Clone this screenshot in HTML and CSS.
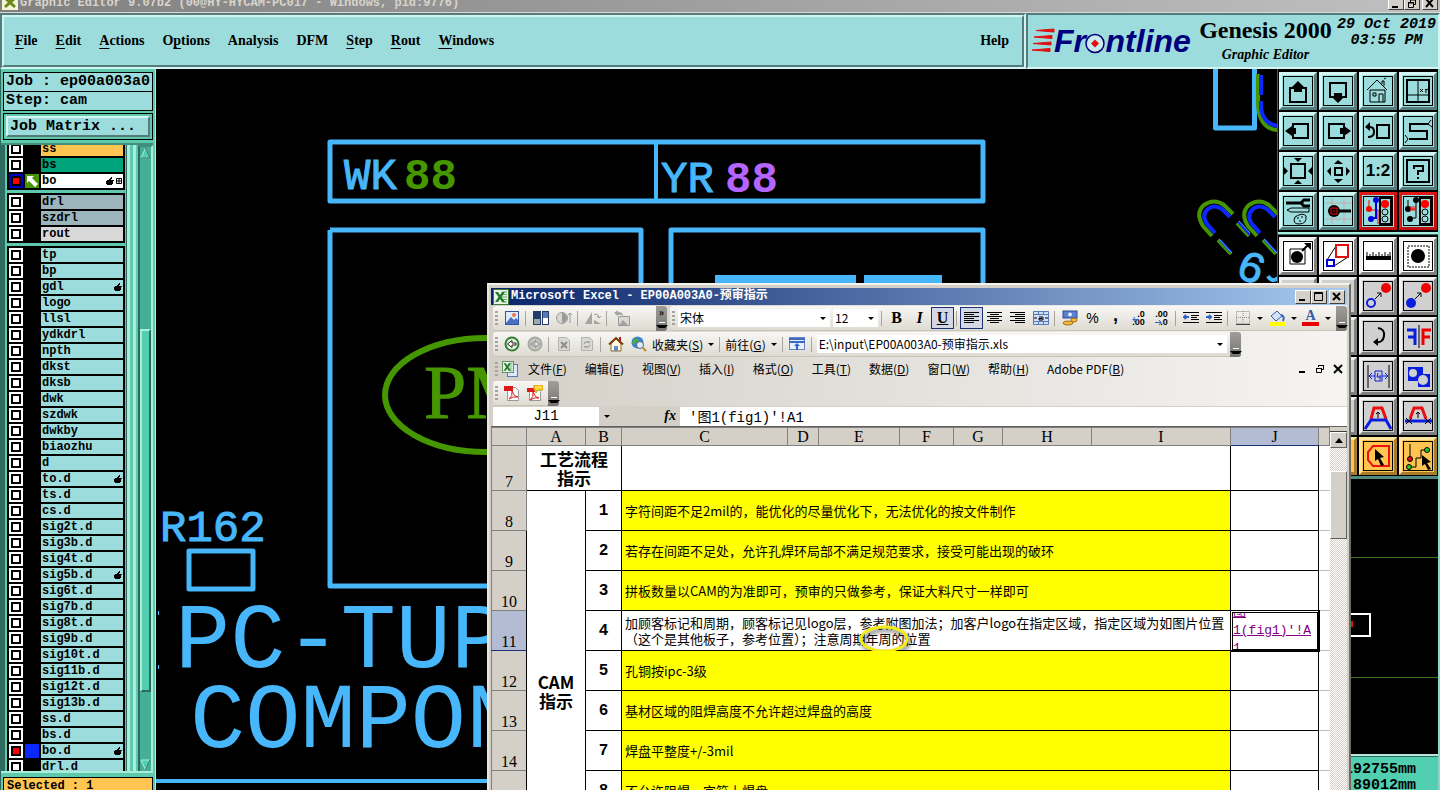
FILE: index.html
```html
<!DOCTYPE html>
<html lang="zh-CN">
<head>
    <meta charset="UTF-8">
    <meta name="viewport" content="width=device-width, initial-scale=1.0">
    <title>Graphic Editor</title>
    <link rel="stylesheet" href="styles.css">
</head>
<body>
    <svg class="sprite">
        <symbol id="hand" viewBox="0 0 8 8"><path d="M0 4h1V3h2V2h1V1h1V0h1v2H5v1h3v1H7v3H6v1H1V7H0z"/></symbol>
        <symbol id="grid" viewBox="0 0 6 6"><path d="M.5.5h5v5h-5zM3 0v6M0 3h6" fill="none" stroke="#000"/></symbol>
        <symbol id="excel" viewBox="0 0 16 16">
            <rect x=".5" y=".5" width="15" height="15" fill="#e8f4e4" stroke="#3c7a3c"/>
            <path d="M9 3h5M9 5.5h5M9 8h5M9 10.500h5M9 13h5" stroke="#6aa56a"/>
            <path d="M2 3h3l2 3 2-3h3L8.500 8l3.500 5H9L7 10l-2 3H2l3.500-5z" fill="#1f7a2e"/>
        </symbol>
    </svg>

    <header class="titlebar">
        <svg class="app-icon" width="16" height="16"><rect width="16" height="16" fill="#f4f4d8"/><path d="M3 4l10 9M13 4L3 13" stroke="#6b8a1c" stroke-width="3"/></svg>
        <span class="title-text">Graphic Editor 9.07b2 (00@HY-HYCAM-PC017 - Windows, pid:9776)</span>
        <div class="win-buttons">
            <button class="win-btn" aria-label="Minimize"><svg width="12" height="11"><path d="M2 9h6" stroke="#000" stroke-width="2"/></svg></button>
            <button class="win-btn" aria-label="Restore"><svg width="12" height="11"><path d="M4.500 4V1.500h5v5H8M2.500 4.500h5v5h-5zM4 2h6M2 5h6" fill="none" stroke="#000"/></svg></button>
            <button class="win-btn close" aria-label="Close"><svg width="12" height="11"><path d="M2 1l7 8M9 1L2 9" stroke="#000" stroke-width="2"/></svg></button>
        </div>
    </header>

    <div class="top">
        <nav class="menu-panel">
            <div class="menu">
                <button><u>F</u>ile</button>
                <button><u>E</u>dit</button>
                <button><u>A</u>ctions</button>
                <button>O<u>p</u>tions</button>
                <button>Analysis</button>
                <button>DFM</button>
                <button><u>S</u>tep</button>
                <button><u>R</u>out</button>
                <button><u>W</u>indows</button>
                <button class="help">Help</button>
            </div>
        </nav>
        <div class="brand">
            <svg class="logo" width="164" height="40" viewBox="1030 22 164 40">
                <path d="M1036 30.500l18-1.500v3zM1034 37l18-1.500v3zM1033 43.500l18-1.500v3zM1032 50l18-1.500v3z" fill="#e01010" stroke="#e01010"/>
                <text x="1054" y="52" class="logo-text">Fr<tspan fill="none">o</tspan>ntline</text>
                <circle cx="1095" cy="43.500" r="9" fill="#c8ecec" stroke="#00007c" stroke-width="1.500"/>
                <path d="M1095 39.500l4 4-4 4-4-4z" fill="#e01010"/>
            </svg>
            <div class="product">
                <div class="product-name">Genesis 2000</div>
                <div class="product-sub">Graphic Editor</div>
            </div>
            <div class="clock">29 Oct 2019<br>03:55 PM</div>
        </div>
    </div>

    <main class="work">
        <aside class="side">
            <div class="job-info">
                <div>Job : ep00a003a0</div>
                <div>Step: cam</div>
            </div>
            <div class="matrix"><button>Job Matrix ...</button></div>
            <div class="layers">
                <div class="layer-list">
                    <div class="group first">
                        <label class="layer"><input type="checkbox"><i></i><span class="orange">ss</span></label>
                        <label class="layer"><input type="checkbox"><i></i><span class="green">bs</span></label>
                        <label class="layer"><input type="checkbox" class="blue" checked><i class="work-layer"><svg width="14" height="14"><path d="M2 2h7L7 4l6 6-3 3-6-6-2 2z" fill="#fff"/></svg></i><span class="white">bo<svg class="mark" width="8" height="8"><use href="#hand"/></svg><svg width="6" height="6"><use href="#grid"/></svg></span></label>
                    </div>
                    <div class="group">
                        <label class="layer"><input type="checkbox"><i></i><span class="steel">drl</span></label>
                        <label class="layer"><input type="checkbox"><i></i><span class="steel">szdrl</span></label>
                        <label class="layer"><input type="checkbox"><i></i><span class="gray">rout</span></label>
                    </div>
                    <div class="group">
                        <label class="layer"><input type="checkbox"><i></i><span>tp</span></label>
                        <label class="layer"><input type="checkbox"><i></i><span>bp</span></label>
                        <label class="layer"><input type="checkbox"><i></i><span>gdl<svg class="mark" width="8" height="8"><use href="#hand"/></svg></span></label>
                        <label class="layer"><input type="checkbox"><i></i><span>logo</span></label>
                        <label class="layer"><input type="checkbox"><i></i><span>llsl</span></label>
                        <label class="layer"><input type="checkbox"><i></i><span>ydkdrl</span></label>
                        <label class="layer"><input type="checkbox"><i></i><span>npth</span></label>
                        <label class="layer"><input type="checkbox"><i></i><span>dkst</span></label>
                        <label class="layer"><input type="checkbox"><i></i><span>dksb</span></label>
                        <label class="layer"><input type="checkbox"><i></i><span>dwk</span></label>
                        <label class="layer"><input type="checkbox"><i></i><span>szdwk</span></label>
                        <label class="layer"><input type="checkbox"><i></i><span>dwkby</span></label>
                        <label class="layer"><input type="checkbox"><i></i><span>biaozhu</span></label>
                        <label class="layer"><input type="checkbox"><i></i><span>d</span></label>
                        <label class="layer"><input type="checkbox"><i></i><span>to.d<svg class="mark" width="8" height="8"><use href="#hand"/></svg></span></label>
                        <label class="layer"><input type="checkbox"><i></i><span>ts.d</span></label>
                        <label class="layer"><input type="checkbox"><i></i><span>cs.d</span></label>
                        <label class="layer"><input type="checkbox"><i></i><span>sig2t.d</span></label>
                        <label class="layer"><input type="checkbox"><i></i><span>sig3b.d</span></label>
                        <label class="layer"><input type="checkbox"><i></i><span>sig4t.d</span></label>
                        <label class="layer"><input type="checkbox"><i></i><span>sig5b.d<svg class="mark" width="8" height="8"><use href="#hand"/></svg></span></label>
                        <label class="layer"><input type="checkbox"><i></i><span>sig6t.d</span></label>
                        <label class="layer"><input type="checkbox"><i></i><span>sig7b.d</span></label>
                        <label class="layer"><input type="checkbox"><i></i><span>sig8t.d</span></label>
                        <label class="layer"><input type="checkbox"><i></i><span>sig9b.d</span></label>
                        <label class="layer"><input type="checkbox"><i></i><span>sig10t.d</span></label>
                        <label class="layer"><input type="checkbox"><i></i><span>sig11b.d</span></label>
                        <label class="layer"><input type="checkbox"><i></i><span>sig12t.d</span></label>
                        <label class="layer"><input type="checkbox"><i></i><span>sig13b.d</span></label>
                        <label class="layer"><input type="checkbox"><i></i><span>ss.d</span></label>
                        <label class="layer"><input type="checkbox"><i></i><span>bs.d</span></label>
                        <label class="layer"><input type="checkbox" checked><i class="shown"></i><span>bo.d<svg class="mark" width="8" height="8"><use href="#hand"/></svg></span></label>
                        <label class="layer"><input type="checkbox"><i></i><span>drl.d</span></label>
                    </div>
                </div>
                <div class="list-edge"></div>
                <div class="scroll">
                    <svg width="11" height="12"><path d="M5.500 1L10 11H1z" fill="#52cfb0" stroke="#a8eedc"/><path d="M5.500 1L10 11H1" fill="none" stroke="#2f6a60"/></svg>
                    <div class="scroll-space"></div>
                    <div class="scroll-thumb"></div>
                    <svg width="11" height="12"><path d="M5.500 11L10 1H1z" fill="#52cfb0" stroke="#a8eedc"/><path d="M5.500 11L10 1" stroke="#2f6a60"/></svg>
                </div>
            </div>
            <div class="selected">Selected : 1</div>
        </aside>

        <section class="canvas">
            <svg width="1122" height="721" viewBox="155 69 1122 721">
                <g fill="none" stroke="#48b6fa" stroke-width="4" stroke-linejoin="round">
                    <rect x="329" y="142" width="653" height="59" stroke-width="5"/>
                    <path d="M655 142v59"/>
                    <path d="M329 230v356h315M329 230h311v200M670 300v-70h312v70" stroke-width="5"/>
                    <rect x="188" y="551" width="64" height="38" stroke-width="5"/>
                    <path d="M155 781h400" />
                    <path d="M1214.500 60v68h39V60" stroke-width="5"/>
                </g>
                <path d="M714 275h141v12H714zM863 275h78v12h-78zM157 611h1v4h-1zM157 665h1v4h-1z" fill="#48b6fa"/>
                <ellipse cx="485" cy="395" rx="101" ry="57" fill="none" stroke="#469600" stroke-width="6"/>
                <text x="423" y="418" class="cad-serif">PM</text>
                <text x="343" y="189" class="cad-small">WK</text>
                <text x="403" y="189" class="cad-digits green-ink">88</text>
                <text x="660" y="192" class="cad-small">YR</text>
                <text x="724" y="192" class="cad-digits violet-ink">88</text>
                <text x="159" y="541" class="cad-small">R162</text>
                <text x="174" y="667" class="cad-large">PC-TUP</text>
                <text x="189" y="747" class="cad-large">COMPON</text>
                <g fill="none" stroke-width="4">
                    <g stroke="#469600">
                        <path d="M1257 74v30q1 25 20 26"/>
                        <path d="M1211 236l-9-10q-8-13 1-21 10-7 20 0l9 9"/>
                        <path d="M1256 236l-9-10q-8-13 1-21 10-7 20 0l9 9"/>
                        <path d="M1217 240l13 14M1262 240l13 14M1236 223l12 13"/>
                    </g>
                    <g stroke="#0a28ff">
                        <path d="M1260 75v20M1260 101v7q2 16 17 18"/>
                        <path d="M1214 233l-8-9q-6-9 1-15 6-5 14 0l8 8"/>
                        <path d="M1259 233l-8-9q-6-9 1-15 6-5 14 0l8 8"/>
                        <path d="M1219 240l11 12M1264 240l11 12M1237 222l12 13" stroke-width="2"/>
                    </g>
                    <path d="M1218 239l13 14M1263 239l13 14M1238 221l11 12" stroke="#48b6fa" stroke-width="1"/>
                    <path d="M1267 276q4 7 10 2" stroke="#48b6fa"/>
                </g>
                <text x="1236" y="281" class="cad-small" transform="rotate(22 1248 270)">6</text>
            </svg>
        </section>

        <aside class="right">
            <div class="tools cyan">
                <button aria-label="Pan up"><svg viewBox="0 0 32 32"><path d="M8 13h16v14H8z" class="b2"/><path d="M16 6l6 6h-2v5h-8v-5h-2z"/></svg></button>
                <button aria-label="Pan down"><svg viewBox="0 0 32 32"><path d="M8 8h16v14H8z" class="b2"/><path d="M16 28l-5-5h1v-5h8v5h1z"/></svg></button>
                <button aria-label="Home"><svg viewBox="0 0 32 32"><path d="M5 15L15 5l10 10M8 15h15v12H8zM17 27v-8h4v8M11 18h3v3h-3zM20 9V6h2v5M22 4l2-1" class="b1"/></svg></button>
                <button aria-label="Area"><svg viewBox="0 0 32 32"><path d="M5 5h22v22H5z" class="b2"/><path d="M16 5v22M5 20h22M18 14l3 3M21 14l-3 3M23 14l1 1 2-1M24 15v3" class="b1"/></svg></button>
                <button aria-label="Pan left"><svg viewBox="0 0 32 32"><path d="M11 9h15v14H11z" class="b2"/><path d="M3 16l7-5v2h4v6h-4v2z"/></svg></button>
                <button aria-label="Pan right"><svg viewBox="0 0 32 32"><path d="M7 9h15v14H7z" class="b2"/><path d="M29 16l-7-5v2h-4v6h4v2z"/></svg></button>
                <button aria-label="Previous view"><svg viewBox="0 0 32 32"><path d="M15 10h12v13H15zM6 12h2q4 0 4 5t-6 5" class="b2"/><path d="M3 12l5-5v9z"/></svg></button>
                <button aria-label="Snake"><svg viewBox="0 0 32 32"><path d="M27 9H8v7h17v8H7" class="b2"/><path d="M26 9l3-4M26 9l4 3M6 24l-3-4M6 24l-3 4" class="b1"/></svg></button>
                <button aria-label="Zoom in"><svg viewBox="0 0 32 32"><path d="M9 9h14v14H9z" class="b2"/><path d="M16 7l-4-4h8zM16 25l-4 4h8zM6 16l-4-4v8zM26 16l4-4v8z"/></svg></button>
                <button aria-label="Zoom out"><svg viewBox="0 0 32 32"><path d="M13 13h7v7h-7z" class="b2"/><path d="M16 5l-4 4h9zM16 28l-4-4h9zM5 16l4-4v9zM28 16l-4-4v9z"/></svg></button>
                <button aria-label="Scale" class="ratio"><span>1:2</span></button>
                <button aria-label="Query"><svg viewBox="0 0 32 32"><path d="M5 5h22v22H5zM12 14v-3h9v5h-5v4M16 22v2" class="b2"/></svg></button>
                <button aria-label="Setup"><svg viewBox="0 0 32 32"><path d="M4 8h15M28 5h-6l-3 3 3 3h6" class="b3"/><path d="M5 15l4-2h18v4H9zM13 22q8-5 11-1 1 8-7 8-7 0-4-7zM15 23h2M19 22h2M17 26h2" class="b1"/></svg></button>
                <button aria-label="Snap"><svg viewBox="0 0 32 32"><path d="M4 8h25M4 24h25M10 3v26M22 3v26" stroke="#c8a8a8"/><circle cx="12" cy="16" r="6"/><path d="M17 16h12" class="b3"/><path d="M9 13h6v6H9zM12 15v2" fill="none" stroke="#f00"/></svg></button>
                <button aria-label="Net on" class="alert"><svg viewBox="0 0 32 32"><path d="M7 5v10M7 15h9v14" fill="none" stroke="#f00"/><path d="M14 6v17H9" fill="none" stroke="#0000e0" stroke-width="2"/><circle cx="7" cy="14" r="3" fill="#f00"/><circle cx="14" cy="5" r="3" fill="#0000e0"/><circle cx="9" cy="24" r="3" fill="#0000e0"/><path d="M18 3h11v26H18z" class="b2"/><circle cx="23" cy="9" r="4" fill="#f00"/><circle cx="23" cy="17" r="3" class="b1"/><circle cx="23" cy="24" r="3" class="b1"/></svg></button>
                <button aria-label="Net off" class="alert"><svg viewBox="0 0 32 32"><path d="M14 6v17H9M6 5v10" class="b1"/><circle cx="6" cy="14" r="3"/><circle cx="14" cy="5" r="3"/><circle cx="8" cy="24" r="3"/><path d="M8 14h6M9 11v5M11 11v5M13 11v5" stroke="#f00"/><path d="M18 3h11v26H18z" class="b2"/><circle cx="23" cy="9" r="4" fill="#f00"/><circle cx="23" cy="17" r="3" class="b1"/><circle cx="23" cy="24" r="3" class="b1"/></svg></button>
            </div>
            <div class="tools edit">
                <button class="lit" aria-label="Resize"><svg viewBox="0 0 32 32"><path d="M8 9h15v15H8z" class="b1"/><circle cx="15" cy="17" r="6"/><path d="M20 11l6-6" class="b2"/><path d="M22 3h7v7z"/></svg></button>
                <button class="lit" aria-label="Stretch"><svg viewBox="0 0 32 32"><path d="M14 6L5 20M26 17L12 26" class="b1"/><path d="M14 5h12v12H14z" fill="none" stroke="#e01010" stroke-width="2"/><path d="M5 20h7v6H5z" fill="none" stroke="#0000d0" stroke-width="2"/></svg></button>
                <button class="lit" aria-label="Measure"><svg viewBox="0 0 32 32"><path d="M4 16h25v4H4z"/><path d="M5 12v4M8 14v2M11 12v4M14 14v2M17 12v4M20 14v2M23 12v4M26 14v2M28 12v4" class="b1"/></svg></button>
                <button class="lit" aria-label="Select area"><svg viewBox="0 0 32 32"><path d="M6 6h21v21H6z" class="b1" stroke-dasharray="2 1"/><circle cx="16" cy="16" r="7"/></svg></button>
                <button></button>
                <button></button>
                <button aria-label="Move"><svg viewBox="0 0 32 32"><circle cx="9" cy="23" r="4" fill="none" stroke="#0a1ee0" stroke-width="2"/><circle cx="24" cy="8" r="5" fill="#f00000"/><path d="M13 19l6-6M15 13h4v4" class="b1"/></svg></button>
                <button aria-label="Copy"><svg viewBox="0 0 32 32"><circle cx="9" cy="23" r="5" fill="#0a1ee0"/><circle cx="24" cy="8" r="5" fill="#f00000"/><path d="M13 19l6-6M15 13h4v4" class="b1"/></svg></button>
                <button></button>
                <button></button>
                <button aria-label="Rotate"><svg viewBox="0 0 32 32"><path d="M16 8q7 1 6 8t-8 6" class="b2"/><path d="M11 22l5-4v8z"/></svg></button>
                <button aria-label="Mirror"><svg viewBox="0 0 32 32"><path d="M5 10h8v15M6 17h7" fill="none" stroke="#0a1ee0" stroke-width="3"/><path d="M29 10h-8v15M28 17h-7" fill="none" stroke="#f00000" stroke-width="3"/><path d="M17 5v23" class="b1"/></svg></button>
                <button></button>
                <button></button>
                <button aria-label="Spacing"><svg viewBox="0 0 32 32"><path d="M6 5v23M27 5v23" class="b1"/><path d="M7 16h6M20 16h6M10 13l-3 3 3 3M23 13l3 3-3 3M13 11h7v10h-7zM16 13l-1 4h4M18 15v5" fill="none" stroke="#0a1ee0"/></svg></button>
                <button aria-label="Merge"><svg viewBox="0 0 32 32"><path d="M6 7h15v7h7v13H16v-6H6z" fill="#0a1ee0"/><circle cx="11" cy="13" r="4" fill="#d0d0d0"/><circle cx="21" cy="20" r="5" fill="#d0d0d0"/></svg></button>
                <button></button>
                <button></button>
                <button aria-label="Slope"><svg viewBox="0 0 32 32"><path d="M9 19l3-11h8l4 11" fill="none" stroke="#e81010" stroke-width="3"/><path d="M3 29l6-9h15l5 9" fill="none" stroke="#0a1ee0" stroke-width="3"/><path d="M16 18v-6M14 14l2-2 2 2" class="b1"/></svg></button>
                <button aria-label="Slope cut"><svg viewBox="0 0 32 32"><path d="M8 19l4-11h8l4 11" fill="none" stroke="#e81010" stroke-width="3"/><path d="M3 21h27" stroke="#0a1ee0" stroke-width="3"/><path d="M16 18v-6M14 14l2-2 2 2M4 18l6 6M10 18l-6 6M23 18l6 6M29 18l-6 6" class="b1"/></svg></button>
                <button class="amber"></button>
                <button class="amber"></button>
                <button class="amber" aria-label="Select shape"><svg viewBox="0 0 32 32"><path d="M11 6h16v20H11l-5-6v-8z" fill="none" stroke="#f01010" stroke-width="2"/><path d="M13 9l9 8-4 1 4 7-3 1-3-7-3 2z"/></svg></button>
                <button class="amber" aria-label="Select net"><svg viewBox="0 0 32 32"><path d="M8 4v14M8 27h6v-9h5v-8h5" class="b1"/><circle cx="8" cy="19" r="2.500" fill="#e01010" stroke="#000"/><circle cx="7" cy="27" r="2.500" fill="#2c2" stroke="#000"/><circle cx="25" cy="10" r="2.500" fill="#2c2" stroke="#000"/><path d="M20 15l9 7-4 1 4 6-3 1-3-6-3 2z"/></svg></button>
            </div>
            <div class="overview">
                <svg width="160" height="275" viewBox="1278 479 160 275">
                    <path d="M1278 557.500h160M1278 677.500h160" stroke="#3c7818"/>
                    <rect x="1320" y="614" width="50" height="22" fill="none" stroke="#fff" stroke-width="2"/>
                    <rect x="1345" y="621" width="8" height="6" fill="#c81818"/>
                </svg>
            </div>
            <div class="coords">192755mm<br>89012mm</div>
        </aside>
    </main>

    <section class="excel">
        <div class="xl-title">
            <svg width="16" height="16"><use href="#excel"/></svg>
            <span>Microsoft Excel - EP00A003A0-预审指示</span>
            <div class="win-buttons">
                <button class="win-btn" aria-label="Minimize"><svg width="12" height="11"><path d="M2 9h6" stroke="#000" stroke-width="2"/></svg></button>
                <button class="win-btn" aria-label="Maximize"><svg width="12" height="11"><path d="M1.500 1.500h8v8h-8zM1 2.500h9" fill="none" stroke="#000"/></svg></button>
                <button class="win-btn close" aria-label="Close"><svg width="12" height="11"><path d="M2 2l7 7M9 2L2 9" stroke="#000" stroke-width="2"/></svg></button>
            </div>
        </div>

        <div class="bars">
            <div class="bar-row">
                <div class="bar picture-bar">
                    <span class="grip"></span>
                    <button aria-label="Insert picture"><svg width="16" height="16"><rect x="1.500" y="1.500" width="13" height="13" fill="#dfeaff" stroke="#35529c"/><path d="M2 13l5-6 3 3 2-2 2 2v4H2z" fill="#4a6fc0"/><circle cx="10" cy="5" r="2" fill="#e87840"/></svg></button>
                    <span class="sep"></span>
                    <button aria-label="Color"><svg width="16" height="16"><rect x="0" y="1" width="8" height="14" fill="#243c6c"/><rect x="9.500" y="1.500" width="6" height="13" fill="#fff" stroke="#243c6c"/><rect x="1" y="9" width="6" height="5" fill="#a0a8b0"/><rect x="10" y="2" width="5" height="6" fill="#5878b8"/></svg></button>
                    <button aria-label="Contrast"><svg width="16" height="16"><circle cx="6" cy="8" r="5.500" fill="#d8d8d4" stroke="#9a9a9a"/><path d="M6 3a5 5 0 010 10z" fill="#9a9a9a"/><path d="M14 13V3M12 5l2-2 2 2" fill="none" stroke="#9a9a9a"/></svg></button>
                    <span class="sep"></span>
                    <button aria-label="Rotate left"><svg width="18" height="16"><path d="M8 2v12H1zM10 10l7 4h-7z" fill="#a4a4a0"/><path d="M10 5q4-3 5 3M13 6l2 2 2-2" fill="none" stroke="#9a9a9a"/></svg></button>
                    <span class="sep"></span>
                    <button aria-label="Reset picture"><svg width="16" height="16"><path d="M4.500 6.500h11v9h-11z" fill="#d8d8d4" stroke="#9a9a9a"/><path d="M0 3l4-3v2q5 0 5 4-2-2-5-1v1zM5 15l4-5 5 5z" fill="#a4a4a0"/></svg></button>
                    <span class="bar-end"><b class="more">»</b></span>
                </div>
                <div class="bar grow">
                    <span class="grip"></span>
                    <label class="combo font-combo"><select aria-label="Font"><option>宋体</option></select></label>
                    <label class="combo size-combo"><select aria-label="Size"><option>12</option></select></label>
                    <span class="sep"></span>
                    <button class="letter" aria-label="Bold"><b>B</b></button>
                    <button class="letter" aria-label="Italic"><em>I</em></button>
                    <button class="letter on" aria-label="Underline"><u>U</u></button>
                    <span class="sep"></span>
                    <button class="on" aria-label="Align left"><svg width="15" height="14"><path d="M0 1.500h15M0 3.500h10M0 5.500h15M0 7.500h10M0 9.500h15M0 11.500h10" stroke="#000"/></svg></button>
                    <button aria-label="Center"><svg width="15" height="14"><path d="M0 1.500h15M3 3.500h9M0 5.500h15M3 7.500h9M0 9.500h15M3 11.500h9" stroke="#000"/></svg></button>
                    <button aria-label="Align right"><svg width="15" height="14"><path d="M0 1.500h15M5 3.500h10M0 5.500h15M5 7.500h10M0 9.500h15M5 11.500h10" stroke="#000"/></svg></button>
                    <button aria-label="Merge cells"><svg width="16" height="16"><path d="M.5 1.500h15v13H.5zM.5 4.500h15M.5 11.500h15M5.500 1v3M10.500 1v3M5.500 12v3M10.500 12v3" fill="#cfe0fa" stroke="#5a78b4"/><path d="M1 8h3M12 8h3M6 7h4v3H6V8.500h3" fill="none" stroke="#000"/></svg></button>
                    <span class="sep"></span>
                    <button aria-label="Currency"><svg width="16" height="16"><rect x="1" y="1" width="14" height="7" fill="#5a80d0" stroke="#2c4c98"/><circle cx="8" cy="4.500" r="2" fill="#dfeaff"/><ellipse cx="6" cy="13" rx="5" ry="2" fill="#f0b840" stroke="#a87010"/><ellipse cx="12" cy="10" rx="3" ry="2" fill="#f0b840" stroke="#a87010"/></svg></button>
                    <button class="sign">%</button>
                    <button class="sign comma" aria-label="Comma style">,</button>
                    <button aria-label="Increase decimal" class="dec"><span>.0<br>.00</span><svg width="7" height="5"><path d="M7 2.500H1M3 0L1 2.500 3 5" fill="none" stroke="#2f62c8"/></svg></button>
                    <button aria-label="Decrease decimal" class="dec less"><span>.00<br>.0</span><svg width="7" height="5"><path d="M0 2.500h6M4 0l2 2.500L4 5" fill="none" stroke="#2f62c8"/></svg></button>
                    <span class="sep"></span>
                    <button aria-label="Decrease indent"><svg width="16" height="14"><path d="M0 1.500h16M8 4.500h8M8 6.500h6M8 8.500h8M0 11.500h16" stroke="#000"/><path d="M6 6H1M3 4L1 6l2 2" fill="none" stroke="#2f62c8" stroke-width="2"/></svg></button>
                    <button aria-label="Increase indent"><svg width="16" height="14"><path d="M0 1.500h16M8 4.500h8M8 6.500h6M8 8.500h8M0 11.500h16" stroke="#000"/><path d="M0 6h5M3 4l2 2-2 2" fill="none" stroke="#2f62c8" stroke-width="2"/></svg></button>
                    <span class="sep"></span>
                    <button aria-label="Borders"><svg width="14" height="14"><path d="M.5 .5h13v12H.5zM7 0v12M0 6.500h14" fill="none" stroke="#888" stroke-dasharray="1 1"/><path d="M0 13.500h14" stroke="#444"/></svg></button>
                    <button class="drop" aria-label="Border styles"></button>
                    <button aria-label="Fill color"><svg width="16" height="16"><path d="M2 6l6-5 5 5-6 5z" fill="#d4e2fa" stroke="#3c5aa0"/><path d="M12 5q4 1 2 6" fill="none" stroke="#2f62c8" stroke-width="2"/><path d="M0 12h16v4H0z" fill="#ff0"/></svg></button>
                    <button class="drop" aria-label="Fill colors"></button>
                    <button class="font-color" aria-label="Font color">A</button>
                    <button class="drop" aria-label="Font colors"></button>
                    <span class="bar-end"></span>
                </div>
            </div>

            <div class="bar-row">
                <div class="bar web-bar">
                    <span class="grip"></span>
                    <button aria-label="Back"><svg width="16" height="16"><circle cx="8" cy="8" r="6.500" fill="#e4f4dc" stroke="#2e7d32" stroke-width="2"/><path d="M3.500 8L8 4.500V7h4v2H8v2.500z" fill="#fff" stroke="#222"/></svg></button>
                    <button aria-label="Forward"><svg width="16" height="16"><circle cx="8" cy="8" r="6.500" fill="#c8c8c4" stroke="#a8a8a4" stroke-width="2"/><path d="M12.500 8L8 4.500V7H4v2h4v2.500z" fill="#ddd" stroke="#888"/></svg></button>
                    <span class="sep"></span>
                    <button aria-label="Stop"><svg width="14" height="16"><path d="M1.500 1.500h8l3 3v10h-11z" fill="#d8d8d4" stroke="#b0b0ac"/><path d="M4 6l6 6M10 6l-6 6" stroke="#8c8c88" stroke-width="2"/></svg></button>
                    <button aria-label="Refresh"><svg width="14" height="16"><path d="M1.500 1.500h8l3 3v10h-11z" fill="#d8d8d4" stroke="#b0b0ac"/><path d="M4 8q1-3 4-2l1 1V5M10 9q-1 3-4 2l-1-1v2" fill="none" stroke="#8c8c88"/></svg></button>
                    <span class="sep"></span>
                    <button aria-label="Start page"><svg width="16" height="16"><path d="M3 8v7h10V8L8 3z" fill="#fff8dc" stroke="#8a6a20"/><path d="M1 8.500L8 2l7 6.500" fill="none" stroke="#7a3c10" stroke-width="2"/><path d="M11 1h2v4h-2z" fill="#b02020"/><path d="M6 10h4v5H6z" fill="#6a88c8"/></svg></button>
                    <button aria-label="Search the Web"><svg width="16" height="16"><circle cx="6.500" cy="6.500" r="6" fill="#3c80d0"/><path d="M2 4q3-3 5-1t-2 4-1 4q-4-3-2-7z" fill="#4ca84c"/><circle cx="9" cy="9" r="3.500" fill="#dcecfc" stroke="#567"/><path d="M12 12l3 3" stroke="#c08820" stroke-width="2"/></svg></button>
                    <button class="text-btn">收藏夹(<u>S</u>)<i class="arrow"></i></button>
                    <span class="sep"></span>
                    <button class="text-btn">前往(<u>G</u>)<i class="arrow"></i></button>
                    <span class="sep"></span>
                    <button aria-label="Show only Web toolbar"><svg width="16" height="16"><rect x=".5" y="1.500" width="15" height="12" fill="#e8f0ff" stroke="#6a88c8"/><path d="M0 3h16M0 6h16" stroke="#3c68c0" stroke-width="2"/><path d="M8 7l3 3H9v4H7v-4H5z" fill="#2f62c8"/></svg></button>
                    <span class="sep"></span>
                    <label class="combo address"><input type="text" aria-label="Address" value="E:\input\EP00A003A0-预审指示.xls"></label>
                    <span class="bar-end"></span>
                </div>
            </div>

            <div class="xl-menu">
                <span class="grip"></span>
                <svg class="doc-icon" width="16" height="16"><rect x="5.500" y="3.500" width="10" height="12" fill="#dce8fc" stroke="#5a78b4"/><use href="#excel" width="12" height="12"/></svg>
                <button>文件(<u>F</u>)</button>
                <button>编辑(<u>E</u>)</button>
                <button>视图(<u>V</u>)</button>
                <button>插入(<u>I</u>)</button>
                <button>格式(<u>O</u>)</button>
                <button>工具(<u>T</u>)</button>
                <button>数据(<u>D</u>)</button>
                <button>窗口(<u>W</u>)</button>
                <button>帮助(<u>H</u>)</button>
                <button>Adobe PDF(<u>B</u>)</button>
                <div class="doc-buttons">
                    <svg width="10" height="10"><path d="M2 8h6" stroke="#000" stroke-width="2"/></svg>
                    <svg width="10" height="10"><path d="M3.500 3V1.500h5v4H7M1.500 4.500h5v4h-5zM3 1.500h6M1 4.500h6" fill="none" stroke="#000"/></svg>
                    <svg width="10" height="10"><path d="M1 1l8 8M9 1L1 9" stroke="#000" stroke-width="2"/></svg>
                </div>
            </div>

            <div class="bar-row">
                <div class="bar pdf-bar">
                    <span class="grip"></span>
                    <button aria-label="Convert to PDF"><svg width="16" height="16"><path d="M3.500 2.500h8l3 3v10h-11z" fill="#fff" stroke="#999"/><path d="M0 1h9v5H0z" fill="#d81c1c"/><path d="M5 14q4-3 3-8 2 6 6 6-5-1-9 2z" fill="none" stroke="#d81c1c"/></svg></button>
                    <button aria-label="Convert and send for review"><svg width="16" height="16"><path d="M2.500 3.500h8l3 3v9h-11z" fill="#fff" stroke="#999"/><path d="M0 3h8v4H0z" fill="#d81c1c"/><path d="M3 15q4-3 3-8 2 6 6 6-5-1-9 2z" fill="none" stroke="#d81c1c"/><path d="M7 0h9v5h-5l-2 3V5H7z" fill="#ffd83c" stroke="#c89810"/></svg></button>
                    <span class="bar-end"></span>
                </div>
            </div>
        </div>

        <div class="formula">
            <input type="text" class="name-box" aria-label="Name Box" value="J11">
            <i class="arrow"></i>
            <span class="fx">fx</span>
            <input type="text" class="formula-box" aria-label="Formula Bar" value="'图1(fig1)'!A1">
        </div>

        <div class="sheet">
            <table>
                <colgroup>
                    <col class="c-row"><col class="c-a"><col class="c-b"><col class="c-c"><col class="c-d"><col class="c-e"><col class="c-f"><col class="c-g"><col class="c-h"><col class="c-i"><col class="c-j"><col>
                </colgroup>
                <thead>
                    <tr><th></th><th>A</th><th>B</th><th>C</th><th>D</th><th>E</th><th>F</th><th>G</th><th>H</th><th>I</th><th class="current">J</th><th></th></tr>
                </thead>
                <tbody>
                    <tr class="r7"><th>7</th><td colspan="2" class="head">工艺流程<br>指示</td><td colspan="7"></td><td></td><td class="blank"></td></tr>
                    <tr><th>8</th><td rowspan="10" class="head">CAM<br>指示</td><td class="num">1</td><td colspan="7" class="note">字符间距不足2mil的，能优化的尽量优化下，无法优化的按文件制作</td><td></td><td class="blank"></td></tr>
                    <tr><th>9</th><td class="num">2</td><td colspan="7" class="note">若存在间距不足处，允许孔焊环局部不满足规范要求，接受可能出现的破环</td><td></td><td class="blank"></td></tr>
                    <tr><th>10</th><td class="num">3</td><td colspan="7" class="note">拼板数量以CAM的为准即可，预审的只做参考，保证大料尺寸一样即可</td><td></td><td class="blank"></td></tr>
                    <tr><th class="current">11</th><td class="num">4</td><td colspan="7" class="note plain">加顾客标记和周期，顾客标记见logo层，参考附图加法；加客户logo在指定区域，指定区域为如图片位置<br>（这个是其他板子，参考位置）；注意周期年周的位置<svg class="ring" width="56" height="34"><ellipse cx="26" cy="15" rx="23" ry="12" fill="none" stroke="#f4ec10" stroke-width="3"/></svg></td><td class="active"><div><a href="#fig1">图<br>1(fig1)'!A<br>1</a></div></td><td class="blank"></td></tr>
                    <tr><th>12</th><td class="num">5</td><td colspan="7" class="note">孔铜按ipc-3级</td><td></td><td class="blank"></td></tr>
                    <tr><th>13</th><td class="num">6</td><td colspan="7" class="note">基材区域的阻焊高度不允许超过焊盘的高度</td><td></td><td class="blank"></td></tr>
                    <tr><th>14</th><td class="num">7</td><td colspan="7" class="note">焊盘平整度+/-3mil</td><td></td><td class="blank"></td></tr>
                    <tr><th>15</th><td class="num">8</td><td colspan="7" class="note">不允许阻焊、字符上焊盘</td><td></td><td class="blank"></td></tr>
                    <tr><th></th><td class="num"></td><td colspan="7" class="note"></td><td></td><td class="blank"></td></tr>
                    <tr><th></th><td class="num"></td><td colspan="7" class="note"></td><td></td><td class="blank"></td></tr>
                </tbody>
            </table>
            <div class="v-scroll">
                <span class="split"></span>
                <button class="v-up" aria-label="Scroll up"><svg width="8" height="5"><path d="M0 5h8L4 0z"/></svg></button>
                <div class="v-thumb"></div>
            </div>
        </div>
    </section>
</body>
</html>
```
FILE: styles.css
```css
* {
    box-sizing: border-box;
}

body {
    display: flex;
    flex-direction: column;
    height: 100vh;
    margin: 0;
    overflow: hidden;
    position: relative;
    background-color: #000;
    color: #000;
    font-family: "Noto Sans CJK SC", sans-serif;
    font-size: 12px;
}

button,
input,
select {
    margin: 0;
    padding: 0;
    border: none;
    border-radius: 0;
    background: none;
    color: inherit;
    font: inherit;
}

button {
    white-space: nowrap;
}

svg {
    display: block;
    flex: none;
}

.sprite {
    position: absolute;
    width: 0;
    height: 0;
}

/* main title bar */
.titlebar {
    display: flex;
    align-items: flex-end;
    flex: none;
    height: 13px;
    padding: 0 2px 2px;
    overflow: hidden;
    background: linear-gradient(to right, #808080, #c0c0c0);
    border-bottom: 1px solid #d8d8d4;
}

.app-icon {
    margin-right: 2px;
}

.title-text {
    color: #d8d4cc;
    font-family: "Liberation Mono", monospace;
    font-weight: bold;
    line-height: 13px;
}

.win-buttons {
    display: flex;
    margin-left: auto;
}

.win-btn {
    display: flex;
    align-items: center;
    justify-content: center;
    width: 16px;
    height: 14px;
    background-color: #d4d0c8;
    border: 1px solid;
    border-color: #fff #404040 #404040 #fff;
}

.win-btn.close {
    margin-left: 2px;
}

/* menu and brand */
.top {
    display: flex;
    flex: none;
    height: 56px;
}

.menu-panel {
    flex: 1;
    background-color: #9cdcdc;
    border: 2px solid;
    border-color: #547c7c #d4f6f2 #d4f6f2 #547c7c;
}

.menu {
    display: flex;
    align-items: center;
    gap: 18px;
    height: 100%;
    padding: 0 13px 0 11px;
    border: 2px solid;
    border-color: #d4f6f2 #547c7c #547c7c #d4f6f2;
    font-family: "Liberation Serif", serif;
    font-size: 14px;
    font-weight: bold;
}

.menu u {
    text-underline-offset: 3px;
}

.menu .help {
    margin-left: auto;
}

.brand {
    display: flex;
    align-items: flex-start;
    justify-content: space-between;
    width: 414px;
    padding: 2px 2px 0 2px;
    background-color: #9cdcdc;
    border: 2px solid;
    border-color: #547c7c #d4f6f2 #d4f6f2 #547c7c;
}

.logo {
    margin-top: 5px;
}

.logo-text {
    fill: #00007c;
    font-family: "Liberation Sans", sans-serif;
    font-size: 32px;
    font-style: italic;
    font-weight: bold;
}

.product {
    font-family: "Liberation Serif", serif;
    font-weight: bold;
    text-align: center;
}

.product-name {
    font-size: 24px;
    line-height: 26px;
}

.product-sub {
    font-size: 14px;
    font-style: italic;
    line-height: 24px;
}

.clock {
    font-family: "Liberation Mono", monospace;
    font-size: 15px;
    font-style: italic;
    font-weight: bold;
    line-height: 16px;
    text-align: center;
}

.work {
    display: flex;
    flex: 1;
    min-height: 0;
}

/* layer panel */
.side {
    display: flex;
    flex: none;
    flex-direction: column;
    width: 156px;
    padding: 3px 2px 0 1px;
    background-color: #5fc9ae;
    border-left: 1px solid #2f6a60;
    border-right: 1px solid #a8eedc;
    font-family: "Liberation Mono", monospace;
    font-weight: bold;
}

.job-info {
    margin: 0 0 2px 1px;
    font-size: 15px;
    line-height: 18px;
}

.job-info div {
    padding-left: 2px;
    background-color: #9cdcdc;
    border: 1px solid #000;
}

.job-info div + div {
    border-top: none;
}

.matrix {
    margin-left: 1px;
    padding: 2px;
    border: 1px solid #000;
}

.matrix button {
    width: 100%;
    height: 21px;
    padding-left: 2px;
    background-color: #9cdcdc;
    border: 2px solid;
    border-color: #d4f6f2 #547c7c #547c7c #d4f6f2;
    font-size: 15px;
    line-height: 16px;
    text-align: left;
}

.layers {
    display: flex;
    flex: 1;
    min-height: 0;
    margin: 3px 0 0 -1px;
    border-top: 2px solid #3f8f7c;
    border-bottom: 2px solid #a8eedc;
    overflow: hidden;
}

.layer-list {
    width: 124px;
    padding-left: 2px;
    border-left: 4px solid #2f6a60;
}

.group {
    display: grid;
    gap: 2px;
    margin-bottom: 3px;
    padding: 2px;
    background-color: #000;
}

/* the list is scrolled a few pixels down */
.group.first {
    margin-top: -5px;
}

.layer {
    display: grid;
    grid-template-columns: 14px 14px 1fr;
    gap: 2px;
    height: 14px;
}

.layer input {
    appearance: none;
    width: 14px;
    height: 14px;
    background-color: #fff;
    border: 2px solid #fff;
    box-shadow: inset 0 0 0 2px #000;
}

.layer input:checked {
    background-color: #f00;
}

.layer input.blue {
    border-color: #0000c0;
}

.layer span {
    display: flex;
    align-items: center;
    gap: 2px;
    padding: 0 1px;
    background-color: #9cdcdc;
    font-size: 12px;
    line-height: 14px;
}

.layer .orange { background-color: #ffc550; }
.layer .green { background-color: #00a47c; }
.layer .white { background-color: #fff; }
.layer .steel { background-color: #9cb4bc; }
.layer .gray { background-color: #d8d8d8; }
.layer .work-layer { background-color: #469600; }
.layer .shown { background-color: #0a28ff; }

.mark {
    margin-left: auto;
}

.list-edge {
    width: 10px;
    margin-left: 1px;
    background: linear-gradient(to right, #2f6a60 0 1px, #a8eedc 1px 4px, #5fc9ae 4px 7px, #a8eedc 7px);
}

.scroll {
    display: flex;
    flex-direction: column;
    align-items: center;
    width: 15px;
    margin-left: auto;
    background-color: #45ae96;
    border: 2px solid;
    border-color: #3f8f7c #a8eedc #a8eedc #2f6a60;
    border-bottom: none;
}

.scroll-space {
    flex: 171;
}

.scroll-thumb {
    flex: 362;
    width: 11px;
    margin-bottom: 67px;
    background-color: #52cfb0;
    border: 2px solid;
    border-color: #a8eedc #2f6a60 #2f6a60 #a8eedc;
}

.selected {
    height: 13px;
    margin: 4px 0 0 1px;
    padding-left: 3px;
    background-color: #ffc550;
    border: 1px solid #000;
    border-bottom: none;
    font-size: 12px;
    line-height: 16px;
}

/* drawing */
.canvas {
    flex: 1;
    min-width: 0;
    overflow: hidden;
    background-color: #000;
}

.cad-small,
.cad-large,
.cad-digits {
    fill: #48b6fa;
    stroke: #48b6fa;
    font-family: "Liberation Mono", monospace;
}

.cad-small {
    font-size: 44px;
}

.cad-large {
    font-size: 92px;
    stroke: none;
}

.cad-digits {
    font-size: 44px;
    font-weight: bold;
}

.cad-digits.green-ink {
    fill: #469600;
    stroke: none;
}

.cad-digits.violet-ink {
    fill: #b464ff;
    stroke: none;
}

.cad-serif {
    fill: #469600;
    stroke: #469600;
    font-family: "Liberation Serif", serif;
    font-size: 76px;
}

/* tool buttons */
.right {
    display: flex;
    flex: none;
    flex-direction: column;
    width: 163px;
    padding-top: 1px;
    background-color: #000;
    border-left: 1px solid #2f6a60;
    border-right: 2px solid #8cd8c8;
}

.tools {
    display: grid;
    grid-template-columns: repeat(4, 38px);
    gap: 2px;
    padding: 2px 0 2px 1px;
}

.cyan {
    background-color: #000;
    border-bottom: 2px solid #a8eedc;
}

.edit {
    padding: 2px 0 1px 1px;
    border-top: 1px solid #3f6f68;
    border-bottom: 3px solid #4f8a80;
}

.tools button {
    width: 38px;
    height: 38px;
    background-color: #d0d0d0;
    border: 3px solid;
    border-color: #f0f0f0 #808080 #808080 #f0f0f0;
}

.tools.cyan button {
    background-color: #9cdcdc;
    border-color: #d4f6f2 #547c7c #547c7c #d4f6f2;
}

.tools.cyan .alert {
    border-color: #e01818 #c01010 #c01010 #e01818;
}

.tools .lit {
    background-color: #fff;
}

.tools .amber {
    background-color: #ffc550;
    border-color: #ffe4a0 #a87c28 #a87c28 #ffe4a0;
}

.tools svg,
.ratio span {
    width: 32px;
    height: 32px;
    outline: 1px solid #000;
    outline-offset: -2px;
}

.ratio span {
    display: block;
    font-family: "Liberation Sans", sans-serif;
    font-size: 17px;
    font-weight: bold;
    line-height: 32px;
}

.b1,
.b2,
.b3 {
    fill: none;
    stroke: #000;
}

.b2 {
    stroke-width: 2;
}

.b3 {
    stroke-width: 3;
}

.overview {
    flex: 1;
    min-height: 0;
    overflow: hidden;
    border-bottom: 2px solid #b8e8dc;
}

.coords {
    height: 34px;
    padding: 5px 22px 0 0;
    background-color: #52cfb0;
    border-top: 1px solid #2f6a60;
    font-family: "Liberation Mono", monospace;
    font-size: 15px;
    font-weight: bold;
    line-height: 16px;
    text-align: right;
    white-space: nowrap;
}

/* spreadsheet window */
.excel {
    display: flex;
    flex-direction: column;
    position: absolute;
    top: 283px;
    bottom: 0;
    left: 487px;
    width: 864px;
    overflow: hidden;
    padding: 3px 2px 0 2px;
    background-color: #d4d0c8;
    border: 2px solid;
    border-color: #f4f2ec #6c6c68 #6c6c68 #e8e6e0;
    border-bottom: none;
}

.xl-title {
    display: flex;
    align-items: center;
    flex: none;
    height: 17px;
    padding: 0 2px;
    background: linear-gradient(to right, #0a246a, #a6caf0);
    color: #fff;
    font-family: "Liberation Mono", "Noto Sans CJK SC", monospace;
    font-size: 12px;
    font-weight: bold;
    line-height: 17px;
    white-space: nowrap;
}

.xl-title span {
    margin-left: 2px;
}

.bars {
    display: flex;
    flex: none;
    flex-direction: column;
    gap: 1px;
    padding: 1px 0 0 2px;
    background: linear-gradient(to right, #d4d0c8, #f5f4f2);
}

.bar-row {
    display: flex;
    gap: 3px;
}

.bar {
    display: flex;
    align-items: center;
    height: 25px;
    background: linear-gradient(#f8f7f4, #dedbd2);
    border-bottom: 1px solid #c8c4ba;
    border-radius: 3px;
}

.grow {
    flex: 1;
}

.picture-bar {
    width: 174px;
}

.bar button {
    display: flex;
    align-items: center;
    justify-content: center;
    width: 23px;
    height: 22px;
}

.bar button.on {
    background-color: #d4d8e4;
    border: 1px solid #1c3078;
}

.grip {
    flex: none;
    width: 3px;
    height: 15px;
    margin: 0 2px;
    background: repeating-linear-gradient(#a8a49c 0 2px, transparent 2px 4px);
}

.sep {
    width: 1px;
    height: 15px;
    margin: 0 3px 0 2px;
    background-color: #a8a49c;
}

.bar-end {
    display: flex;
    flex-direction: column;
    align-items: center;
    width: 11px;
    height: 25px;
    margin-left: auto;
    padding-bottom: 3px;
    background: linear-gradient(#fff, #fff) 3px 16px / 6px 1px no-repeat, linear-gradient(#a09e98, #747474);
    border-radius: 0 3px 3px 0;
}

.bar-end::after {
    content: "";
    width: 6px;
    margin-top: auto;
    border: 3px solid transparent;
    border-top: 3px solid #000;
    border-bottom: none;
}

.more {
    font-size: 10px;
    line-height: 11px;
}

.combo {
    display: flex;
    align-items: center;
    position: relative;
    height: 18px;
    margin-right: 3px;
    background-color: #fff;
}

.combo::after {
    content: "";
    position: absolute;
    right: 4px;
    border: 3px solid transparent;
    border-top: 3px solid #000;
    border-bottom: none;
    pointer-events: none;
}

.combo select,
.combo input {
    appearance: none;
    width: 100%;
    height: 18px;
    padding: 0 2px;
    font-size: 12px;
    line-height: 18px;
}

.font-combo {
    width: 152px;
    margin-left: 1px;
}

.size-combo {
    width: 45px;
    margin-right: 1px;
}

.letter {
    font-family: "Liberation Serif", serif;
    font-size: 16px;
    font-weight: bold;
}

.bar .sign {
    font-family: "Liberation Sans", sans-serif;
    font-size: 14px;
}

.bar .comma {
    font-size: 18px;
    font-weight: bold;
    line-height: 8px;
    padding-bottom: 6px;
}

.bar .dec {
    display: grid;
    align-content: center;
}

.dec span,
.dec svg {
    grid-area: 1 / 1;
}

.dec svg {
    margin-top: 2px;
}

.dec.less svg {
    align-self: end;
    margin: 0 0 1px;
}

.dec span {
    font-family: "Liberation Sans", sans-serif;
    font-size: 9px;
    font-weight: bold;
    line-height: 8px;
    text-align: right;
}

.bar .drop {
    width: 11px;
}

.drop::after,
.arrow {
    content: "";
    display: inline-block;
    border: 3px solid transparent;
    border-top: 3px solid #000;
    border-bottom: none;
    vertical-align: middle;
}

.bar .font-color {
    height: 16px;
    width: 17px;
    margin: 0 3px;
    border-bottom: 4px solid #e80000;
    color: #3458a8;
    font-family: "Liberation Serif", serif;
    font-size: 14px;
    font-weight: bold;
    line-height: 12px;
}

.web-bar {
    width: 748px;
}

.bar .text-btn {
    width: auto;
    padding: 0 3px 0 2px;
}

.text-btn .arrow {
    margin-left: 5px;
}

.web-bar .address {
    flex: 1;
    margin-left: 2px;
}

.xl-menu {
    display: flex;
    align-items: center;
    height: 22px;
}

.doc-icon {
    margin: 0 1px 0 2px;
}

.xl-menu button {
    padding: 0 9px;
    line-height: 20px;
}

.doc-buttons {
    display: flex;
    gap: 8px;
    margin: 0 4px 0 auto;
}

.pdf-bar {
    width: 66px;
}

.formula {
    display: flex;
    align-items: center;
    flex: none;
    height: 20px;
    padding-left: 2px;
}

.formula input {
    height: 19px;
    background-color: #fff;
    font-family: "Liberation Mono", "Noto Sans CJK SC", monospace;
    font-size: 14px;
}

.name-box {
    width: 106px;
    text-align: center;
}

.formula .arrow {
    margin-left: 5px;
}

.fx {
    margin: 0 4px 0 auto;
    font-family: "Liberation Serif", serif;
    font-size: 14px;
    font-style: italic;
    font-weight: bold;
}

.formula .formula-box {
    width: 667px;
    padding-left: 9px;
}

.sheet {
    display: flex;
    flex: 1;
    min-height: 0;
    align-items: flex-start;
    overflow: hidden;
    background-color: #fff;
    border-top: 1px solid #606060;
}

table {
    flex: 1;
    table-layout: fixed;
    width: 100%;
    border-collapse: collapse;
    background-color: #fff;
}

.c-row { width: 35px; }
.c-a { width: 59px; }
.c-b { width: 36px; }
.c-c { width: 166px; }
.c-d { width: 31px; }
.c-e { width: 81px; }
.c-f { width: 54px; }
.c-g { width: 49px; }
.c-h { width: 89px; }
.c-i { width: 139px; }
.c-j { width: 88px; }

tr {
    height: 40px;
}

thead tr {
    height: 18px;
}

.r7 {
    height: 45px;
}

th,
td {
    padding: 0;
    border: 1px solid #000;
}

th {
    background-color: #d4d0c8;
    border-color: #808080;
    font-family: "Liberation Serif", serif;
    font-size: 16px;
    font-weight: normal;
    line-height: 17px;
    vertical-align: bottom;
}

th.current {
    background-color: #b4bcd4;
    border-bottom-color: #1c3078;
}

.head {
    font-size: 17px;
    font-weight: bold;
    line-height: 19px;
    text-align: center;
}

.num {
    font-family: "Liberation Mono", monospace;
    font-size: 16px;
    font-weight: bold;
    text-align: center;
}

.note {
    position: relative;
    padding: 0 3px;
    background-color: #ff0;
    font-size: 13px;
    line-height: 16px;
    white-space: nowrap;
}

.note.plain {
    background-color: #fff;
}

.ring {
    position: absolute;
    top: 13px;
    left: 236px;
    filter: drop-shadow(2px 3px 2px rgba(0, 0, 0, 0.6));
}

.blank {
    border-color: #c0c0c0;
    border-right: none;
}

.active {
    outline: 3px double #000;
    outline-offset: -2px;
}

.active div {
    display: flex;
    align-items: center;
    height: 36px;
    padding-left: 2px;
    overflow: hidden;
}

.active a {
    color: #800080;
    font-family: "Liberation Mono", "Noto Sans CJK SC", monospace;
    font-size: 13px;
    line-height: 18px;
}

.v-scroll {
    display: flex;
    flex: none;
    flex-direction: column;
    align-self: stretch;
    width: 17px;
    background: conic-gradient(#fff 25%, #d4d0c8 0 50%, #fff 0 75%, #d4d0c8 0) 0 0 / 2px 2px;
}

.split {
    height: 5px;
    background-color: #d4d0c8;
    border-bottom: 1px solid #404040;
}

.v-up,
.v-thumb {
    background-color: #d4d0c8;
    border: 1px solid;
    border-color: #fff #606060 #606060 #fff;
}

.v-up {
    display: flex;
    align-items: center;
    justify-content: center;
    height: 16px;
}

.v-thumb {
    height: 68px;
    margin-top: 23px;
}
```
